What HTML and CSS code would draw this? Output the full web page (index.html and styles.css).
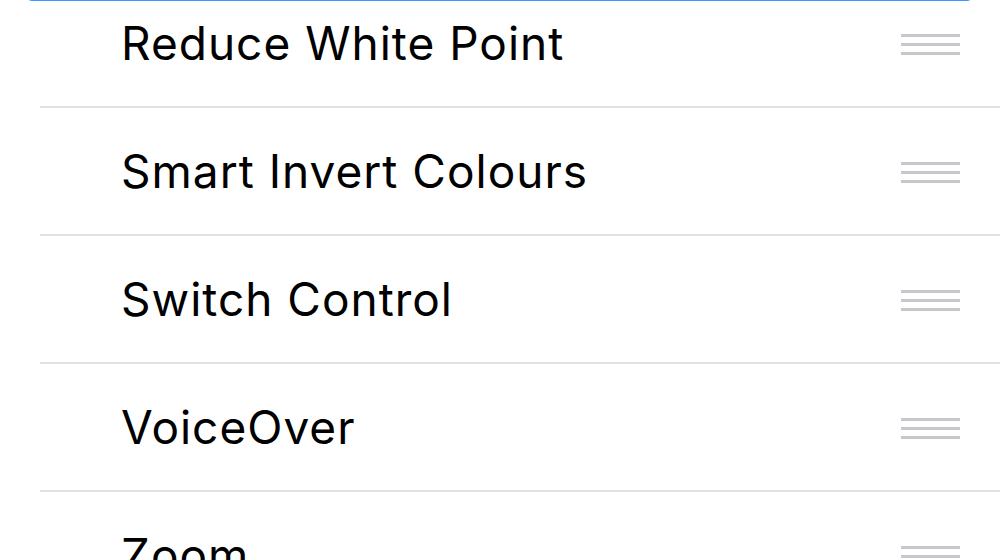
FILE: index.html
```html
<!DOCTYPE html>
<html>
<head>
<meta charset="utf-8">
<link rel="stylesheet" href="styles.css">
</head>
<body>
<div class="screen">
  <div class="drag-edge"></div>
  <ul class="list">
    <li class="row"><span class="label">Reduce White Point</span><span class="grip"><i></i><i></i><i></i></span></li>
    <li class="row"><span class="label">Smart Invert Colours</span><span class="grip"><i></i><i></i><i></i></span></li>
    <li class="row"><span class="label">Switch Control</span><span class="grip"><i></i><i></i><i></i></span></li>
    <li class="row"><span class="label">VoiceOver</span><span class="grip"><i></i><i></i><i></i></span></li>
    <li class="row"><span class="label">Zoom</span><span class="grip"><i></i><i></i><i></i></span></li>
  </ul>
</div>
</body>
</html>
```

FILE: styles.css
```css
html, body {
  margin: 0;
  padding: 0;
  background: #ffffff;
}
.screen {
  position: relative;
  width: 1000px;
  height: 560px;
  overflow: hidden;
  background: #ffffff;
  font-family: "Inter", "Liberation Sans", sans-serif;
}
.drag-edge {
  position: absolute;
  left: 26px;
  top: -10px;
  width: 947px;
  height: 10px;
  border-bottom: 1.5px solid #3a9bfd;
  border-radius: 0 0 6px 6px;
  z-index: 2;
}
.list {
  list-style: none;
  margin: -20px 0 0 40px;
  padding: 0;
}
.row {
  display: flex;
  align-items: center;
  justify-content: space-between;
  height: 126px;
  border-bottom: 2px solid #e2e2e4;
  padding: 0 40px 0 81px;
}
.label {
  font-size: 46px;
  color: #000000;
  letter-spacing: 1px;
}
.grip {
  display: flex;
  flex-direction: column;
  gap: 6px;
  width: 59px;
  margin-top: 2px;
}
.grip i {
  display: block;
  height: 3px;
  background: #c7c7cc;
}
```
